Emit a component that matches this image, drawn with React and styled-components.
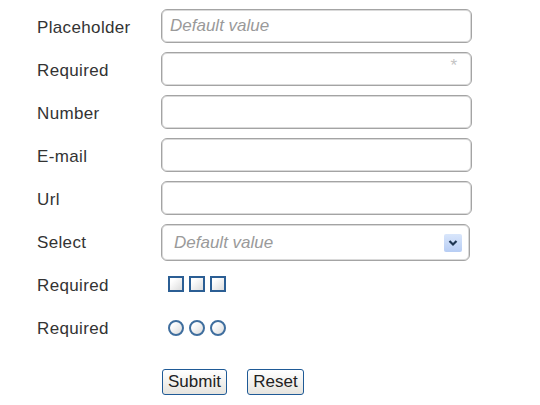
import React from 'react'
import styled, { createGlobalStyle } from 'styled-components'

const GlobalStyle = createGlobalStyle`
  html, body {
    margin: 0;
    padding: 0;
    background: #fff;
  }
  body {
    font-family: "Liberation Sans", Arial, sans-serif;
    color: #222;
  }
`

const App = () => {
  return (
    <>
      <GlobalStyle />
      <Form onSubmit={e => e.preventDefault()}>
        <Row>
          <Label>Placeholder</Label>
          <Field placeholder="Default value" />
        </Row>
        <Row>
          <Label>Required</Label>
          <FieldWrap>
            <Field required />
            <Star>*</Star>
          </FieldWrap>
        </Row>
        <Row>
          <Label>Number</Label>
          <Field type="number" />
        </Row>
        <Row>
          <Label>E-mail</Label>
          <Field type="email" />
        </Row>
        <Row>
          <Label>Url</Label>
          <Field type="url" />
        </Row>
        <Row>
          <Label>Select</Label>
          <SelectBox>
            <SelectText>Default value</SelectText>
            <ArrowBtn>
              <svg width="10" height="8" viewBox="0 0 10 8">
                <path d="M1.5 2 L5 5.5 L8.5 2" fill="none" stroke="#1d3552" strokeWidth="2.2" />
              </svg>
            </ArrowBtn>
          </SelectBox>
        </Row>
        <Row>
          <Label>Required</Label>
          <Group>
            <Check />
            <Check />
            <Check />
          </Group>
        </Row>
        <Row>
          <Label>Required</Label>
          <Group>
            <Radio />
            <Radio />
            <Radio />
          </Group>
        </Row>
        <Actions>
          <Button type="submit" $w={65}>Submit</Button>
          <Button type="reset" $w={57}>Reset</Button>
        </Actions>
      </Form>
    </>
  )
}

const Form = styled.form`
  padding: 9px 0 0 37px;
  display: flex;
  flex-direction: column;
`
const Row = styled.div`
  height: 43px;
  display: grid;
  grid-template-columns: 124px 1fr;
  align-items: start;
`
const Label = styled.label`
  font-size: 17px;
  letter-spacing: 0.35px;
  line-height: 34px;
  padding-top: 2px;
  color: #333;
`
const FieldWrap = styled.div`
  position: relative;
  width: 311px;
`
const Field = styled.input`
  box-sizing: border-box;
  width: 311px;
  height: 34px;
  border: 1px solid #a4a4a4;
  box-shadow: inset 0 0 0 1px #dadada;
  border-radius: 6px;
  padding: 0 8px;
  font-family: "Liberation Sans", Arial, sans-serif;
  font-size: 17px;
  outline: none;
  &::placeholder {
    color: #9a9a9a;
    font-style: italic;
  }
`
const Star = styled.span`
  position: absolute;
  right: 15px;
  top: 4px;
  color: #c4c4c4;
  font-size: 17px;
`
const SelectBox = styled.div`
  box-sizing: border-box;
  width: 309px;
  height: 37px;
  border: 1px solid #a4a4a4;
  box-shadow: inset 0 0 0 1px #dadada;
  border-radius: 6px;
  display: flex;
  align-items: center;
  justify-content: space-between;
  padding: 0 7px 0 12px;
`
const SelectText = styled.span`
  font-size: 17px;
  font-style: italic;
  color: #9a9a9a;
`
const ArrowBtn = styled.span`
  width: 18px;
  height: 18px;
  display: flex;
  align-items: center;
  justify-content: center;
  background: linear-gradient(#d9e6fb, #b7cdf4);
  border-radius: 2px;
`
const Group = styled.div`
  display: flex;
  gap: 5px;
  padding: 9px 0 0 7px;
`
const Check = styled.span`
  box-sizing: border-box;
  width: 16px;
  height: 16px;
  border: 2px solid #2b5e94;
  background: linear-gradient(135deg, #ffffff 20%, #dcdcdc);
`
const Radio = styled.span`
  box-sizing: border-box;
  width: 16px;
  height: 16px;
  border: 2px solid #3f6e9e;
  border-radius: 50%;
  margin-top: 1px;
  background: linear-gradient(135deg, #ffffff 20%, #dcdcdc);
`
const Actions = styled.div`
  display: flex;
  gap: 20px;
  padding: 16px 0 0 125px;
`
const Button = styled.button`
  box-sizing: border-box;
  width: ${p => p.$w}px;
  height: 26px;
  padding: 0;
  border: 1px solid #1f5a96;
  border-radius: 3px;
  background: linear-gradient(#ffffff, #e6e4de);
  font-family: "Liberation Sans", Arial, sans-serif;
  font-size: 17px;
  color: #222;
`

export default App
